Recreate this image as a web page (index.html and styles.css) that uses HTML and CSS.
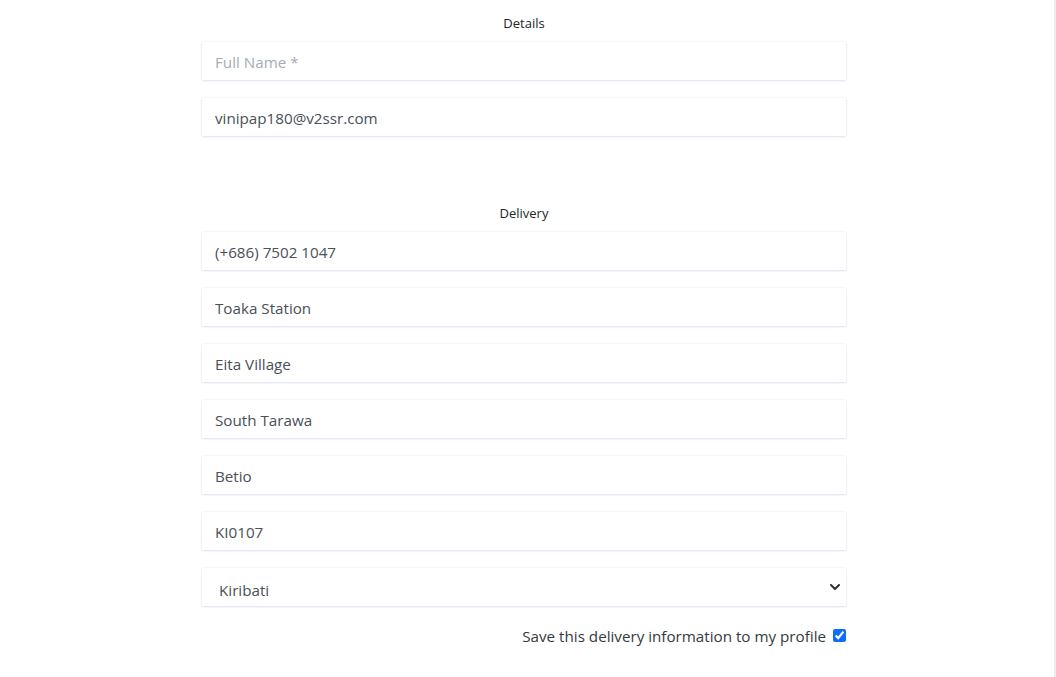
FILE: index.html
```html
<!DOCTYPE html>
<html lang="en">
<head>
<meta charset="utf-8">
<title>Checkout</title>
<link rel="stylesheet" href="styles.css">
</head>
<body>
<div class="page">
  <form class="form">
    <section class="group">
      <h3 class="group-title">Details</h3>
      <input class="field" type="text" placeholder="Full Name *">
      <input class="field" type="email" value="vinipap180@v2ssr.com">
    </section>
    <section class="group group-delivery">
      <h3 class="group-title">Delivery</h3>
      <input class="field" type="text" value="(+686) 7502 1047">
      <input class="field" type="text" value="Toaka Station">
      <input class="field" type="text" value="Eita Village">
      <input class="field" type="text" value="South Tarawa">
      <input class="field" type="text" value="Betio">
      <input class="field" type="text" value="KI0107">
      <div class="select-wrap">
        <select class="field field-select">
          <option selected>Kiribati</option>
          <option>Fiji</option>
          <option>Tuvalu</option>
        </select>
        <svg class="chevron" width="10" height="6" viewBox="0 0 10 6" aria-hidden="true">
          <path d="M1 1 L5 5 L9 1" fill="none" stroke="#333" stroke-width="2" stroke-linecap="round" stroke-linejoin="round"/>
        </svg>
      </div>
    </section>
    <div class="save-row">
      <label class="save-label" for="save">Save this delivery information to my profile</label>
      <input class="save-check" id="save" type="checkbox" checked>
    </div>
  </form>
</div>
</body>
</html>
```
FILE: styles.css
```css
html, body {
  margin: 0;
  padding: 0;
  background: #fff;
}
body {
  font-family: "Open Sans", "Noto Sans", sans-serif;
  color: #212529;
}
.page {
  width: 1056px;
  height: 677px;
  box-sizing: border-box;
  padding-right: 6px;
  border-right: 2px solid #ececec;
  display: flex;
  justify-content: center;
}
.form {
  width: 644px;
  padding-top: 13px;
  display: flex;
  flex-direction: column;
}
.group {
  display: flex;
  flex-direction: column;
  gap: 18px;
}
.group-delivery {
  margin-top: 67px;
}
.group-title {
  margin: 0 0 -9px;
  font-size: 13px;
  line-height: 20px;
  font-weight: 400;
  text-align: center;
  color: #212529;
}
.field {
  box-sizing: border-box;
  width: 100%;
  height: 38px;
  margin: 0;
  padding: 2px 12px 0 13px;
  border: none;
  border-radius: 0;
  background: #fff;
  font-family: inherit;
  font-size: 15.2px;
  color: #495057;
  box-shadow: 0 1px 2px rgba(70, 70, 200, 0.14), 0 0 2px rgba(0, 0, 0, 0.07);
  outline: none;
}
.field::placeholder {
  color: #a3adb8;
}
.select-wrap {
  position: relative;
}
.field-select {
  appearance: none;
  -webkit-appearance: none;
  padding: 5px 12px 0 17px;
}
.chevron {
  position: absolute;
  right: 6px;
  top: 16px;
}
.save-row {
  margin-top: 18px;
  display: flex;
  justify-content: flex-end;
  align-items: center;
  height: 24px;
  gap: 7px;
}
.save-label {
  font-size: 15.2px;
  color: #343a40;
}
.save-check {
  width: 13px;
  height: 13px;
  margin: 0 0 2px;
  accent-color: #0d6efd;
}
```
